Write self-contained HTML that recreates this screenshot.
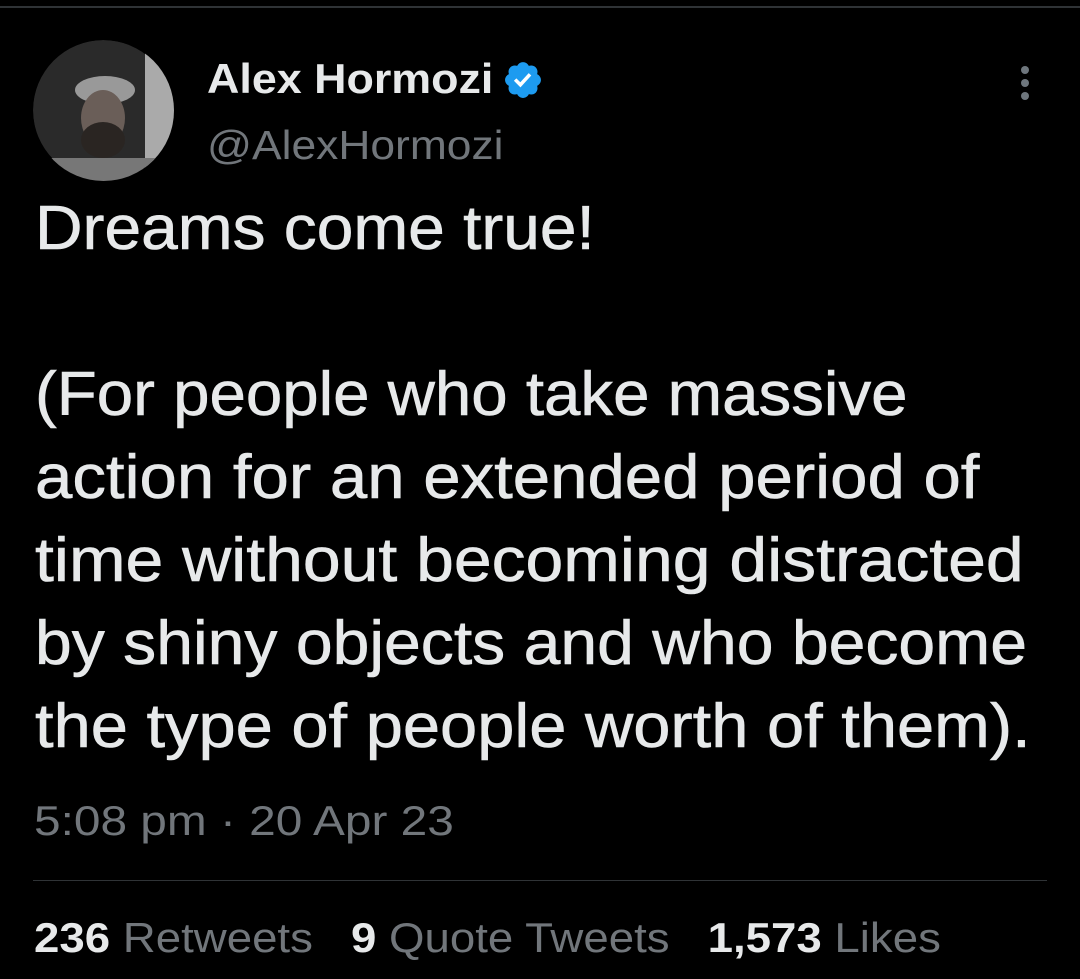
<!DOCTYPE html>
<html><head><meta charset="utf-8"><style>
html,body{margin:0;padding:0;background:#000;width:1080px;height:979px;overflow:hidden;font-family:"Liberation Sans",Arial,sans-serif;}
.top{position:absolute;left:0;top:6px;width:1080px;height:2px;background:#2f3336;}
.av{position:absolute;left:33px;top:40px;width:141px;height:141px;border-radius:50%;overflow:hidden}
.s{transform-origin:0 0;white-space:pre;position:absolute}
.name{left:207px;top:55px;font-size:42px;font-weight:bold;color:#e7e9ea;transform:scaleX(1.067)}
.badge{position:absolute;left:502px;top:59px}
.handle{left:207px;top:122px;font-size:41px;color:#71767b;transform:scaleX(1.082)}
.body{left:35px;top:187px;font-size:62px;line-height:83px;color:#e7e9ea;-webkit-text-stroke:0.6px #e7e9ea}
.body div{transform-origin:0 0;height:83px}
.time{left:34px;top:797px;font-size:42px;color:#71767b;transform:scaleX(1.138)}
.div{position:absolute;left:33px;top:880px;width:1014px;height:1px;background:#2f3336}
.stats{left:34px;top:914px;font-size:42px;color:#71767b;transform:scaleX(1.086)}
.stats b{color:#e7e9ea}
.dots{position:absolute;left:1021px;top:66px}
.dots i{display:block;width:8px;height:8px;border-radius:50%;background:#6e767d;margin-bottom:5px}
</style></head><body>
<div class="top"></div>
<div class="av"><svg width="141" height="141"><circle cx="70" cy="70" r="70" fill="#2a2a2a"/><rect x="112" y="0" width="40" height="141" fill="#aaa"/><ellipse cx="72" cy="50" rx="30" ry="14" fill="#999"/><ellipse cx="70" cy="78" rx="22" ry="28" fill="#6a5e58"/><ellipse cx="70" cy="100" rx="22" ry="18" fill="#2a2522"/><rect x="15" y="118" width="115" height="30" fill="#777"/></svg></div>
<div class="s name">Alex Hormozi</div>
<svg class="badge" width="42" height="42" viewBox="0 0 24 24"><path fill="#1d9bf0" d="M22.25 12c0-1.43-.88-2.670-2.19-3.340.46-1.390.2-2.900-.81-3.910s-2.520-1.270-3.910-.81c-.66-1.310-1.910-2.190-3.340-2.190s-2.670.88-3.330 2.190c-1.400-.46-2.910-.2-3.920.81s-1.260 2.520-.8 3.910c-1.310.67-2.200 1.910-2.200 3.340s.89 2.670 2.200 3.340c-.46 1.390-.21 2.900.8 3.910s2.520 1.260 3.910.81c.67 1.310 1.910 2.190 3.340 2.190s2.680-.88 3.340-2.190c1.390.45 2.900.2 3.910-.81s1.270-2.520.81-3.910c1.310-.67 2.190-1.910 2.190-3.340z"/><path fill="#fff" d="M10.54 16.2l-3.74-3.74 1.41-1.42 2.26 2.26 4.8-5.23 1.47 1.36z"/></svg>
<div class="s handle">@AlexHormozi</div>
<div class="dots"><i></i><i></i><i></i></div>
<div class="s body"><div style="transform:scaleX(1.062)">Dreams come true!</div><div></div><div style="transform:scaleX(1.055)">(For people who take massive</div><div style="transform:scaleX(1.083)">action for an extended period of</div><div style="transform:scaleX(1.095)">time without becoming distracted</div><div style="transform:scaleX(1.066)">by shiny objects and who become</div><div style="transform:scaleX(1.078)">the type of people worth of them).</div></div>
<div class="s time">5:08 pm · 20 Apr 23</div>
<div class="div"></div>
<div class="s stats"><b>236</b> Retweets   <b>9</b> Quote Tweets   <b>1,573</b> Likes</div>
</body></html>
